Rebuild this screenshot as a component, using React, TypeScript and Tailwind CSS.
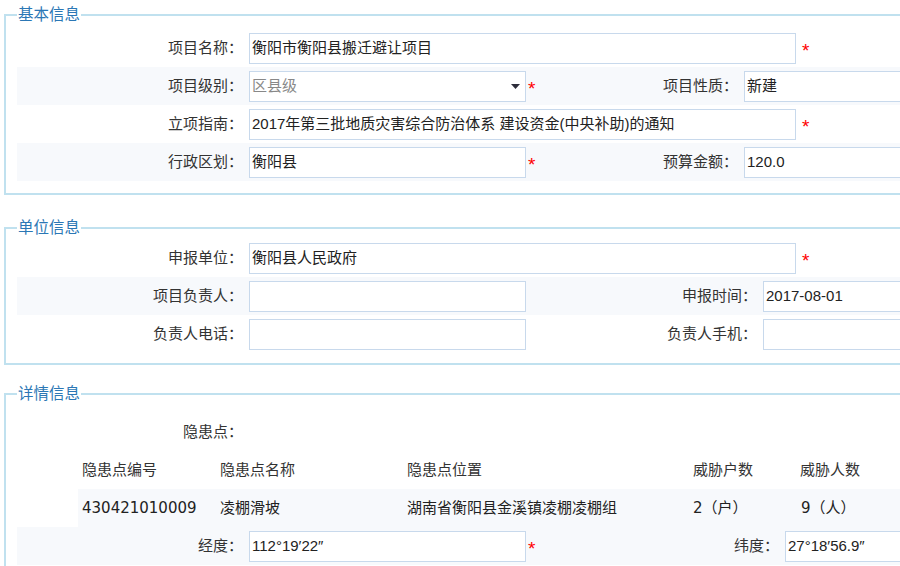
import type { ReactNode } from "react";

const font = "font-['Liberation_Sans','Noto_Sans_CJK_SC',sans-serif]";

const Star = ({ wide = false }: { wide?: boolean }) => (
  <span
    className={
      wide
        ? "ml-[6px] text-[19px] leading-none text-[#ff0000] translate-y-[2px]"
        : "ml-[2px] text-[19px] leading-none text-[#ff0000] translate-y-[2px]"
    }
  >
    *
  </span>
);

const Label = ({ children, width = "w-[232px]" }: { children: ReactNode; width?: string }) => (
  <div className={`${width} shrink-0 pr-[6px] text-right text-[15px] text-[#333]`}>{children}</div>
);

const Input = ({ value = "", wide = false }: { value?: string; wide?: boolean }) => (
  <div
    className={
      wide
        ? "flex h-[31px] w-[547px] shrink-0 items-center border border-[#c8d9ec] bg-white pl-[2px] text-[15px] text-[#222]"
        : "flex h-[31px] w-[277px] shrink-0 items-center border border-[#c8d9ec] bg-white pl-[2px] text-[15px] text-[#222]"
    }
  >
    {value}
  </div>
);

const Select = ({ value }: { value: string }) => (
  <div className="flex h-[31px] w-[277px] shrink-0 items-center justify-between border border-[#c8d9ec] bg-white pl-[2px] pr-[5px] text-[15px] text-[#888]">
    <span>{value}</span>
    <svg width="9" height="5" viewBox="0 0 9 5">
      <path d="M0 0h9L4.5 5z" fill="#2d2d3a" />
    </svg>
  </div>
);

const Row = ({ children, gray = false }: { children: ReactNode; gray?: boolean }) => (
  <div className={gray ? "flex h-[38px] items-center bg-[#f7f9fc]" : "flex h-[38px] items-center"}>
    {children}
  </div>
);

const Fieldset = ({ title, children, className }: { title: string; children: ReactNode; className: string }) => (
  <fieldset className={`ml-[4px] w-[926px] border-2 border-[#c0e1ef] pl-[11px] ${className}`}>
    <legend className="px-[1px] text-[15.5px] leading-[20px] text-[#2b77b5]">{title}</legend>
    {children}
  </fieldset>
);

export default function App() {
  return (
    <div className={`h-[566px] w-[900px] overflow-hidden bg-white ${font}`}>
      <div className="w-[940px] pt-[5px]">
        {/* 基本信息 */}
        <Fieldset title="基本信息" className="pt-[4px] pb-[12px]">
          <Row>
            <Label>项目名称：</Label>
            <Input wide value="衡阳市衡阳县搬迁避让项目" />
            <Star wide />
          </Row>
          <Row gray>
            <Label>项目级别：</Label>
            <div className="flex w-[291px] shrink-0 items-center">
              <Select value="区县级" />
              <Star />
            </div>
            <Label width="w-[204px]">项目性质：</Label>
            <Input value="新建" />
          </Row>
          <Row>
            <Label>立项指南：</Label>
            <Input wide value="2017年第三批地质灾害综合防治体系 建设资金(中央补助)的通知" />
            <Star wide />
          </Row>
          <Row gray>
            <Label>行政区划：</Label>
            <div className="flex w-[291px] shrink-0 items-center">
              <Input value="衡阳县" />
              <Star />
            </div>
            <Label width="w-[204px]">预算金额：</Label>
            <Input value="120.0" />
          </Row>
        </Fieldset>

        {/* 单位信息 */}
        <Fieldset title="单位信息" className="mt-[23px] pt-[1px] pb-[10px]">
          <Row>
            <Label>申报单位：</Label>
            <Input wide value="衡阳县人民政府" />
            <Star wide />
          </Row>
          <Row gray>
            <Label>项目负责人：</Label>
            <div className="w-[291px] shrink-0">
              <Input />
            </div>
            <Label width="w-[223px]">申报时间：</Label>
            <Input value="2017-08-01" />
          </Row>
          <Row>
            <Label>负责人电话：</Label>
            <div className="w-[291px] shrink-0">
              <Input />
            </div>
            <Label width="w-[223px]">负责人手机：</Label>
            <Input />
          </Row>
        </Fieldset>

        {/* 详情信息 */}
        <Fieldset title="详情信息" className="mt-[19px] pt-[9px] pb-[10px]">
          <Row>
            <Label>隐患点：</Label>
          </Row>
          <div className="ml-[61px] text-[15px] text-[#333]">
            <div className="flex h-[38px] items-center">
              <div className="w-[138px] pl-[4px]">隐患点编号</div>
              <div className="w-[187px] pl-[4px]">隐患点名称</div>
              <div className="w-[286px] pl-[4px]">隐患点位置</div>
              <div className="w-[107px] pl-[4px]">威胁户数</div>
              <div className="pl-[4px]">威胁人数</div>
            </div>
            <div className="flex h-[38px] items-center bg-[#f7f9fc] font-['DejaVu_Sans','Noto_Sans_CJK_SC',sans-serif] text-[#222]">
              <div className="w-[138px] pl-[4px]">430421010009</div>
              <div className="w-[187px] pl-[4px]">凌棚滑坡</div>
              <div className="w-[286px] pl-[4px]">湖南省衡阳县金溪镇凌棚凌棚组</div>
              <div className="w-[107px] pl-[4px]">2（户）</div>
              <div className="pl-[5px]">9（人）</div>
            </div>
          </div>
          <Row gray>
            <Label>经度：</Label>
            <div className="flex w-[291px] shrink-0 items-center">
              <Input value="112°19′22″" />
              <Star />
            </div>
            <Label width="w-[245px]">纬度：</Label>
            <Input value="27°18′56.9″" />
          </Row>
        </Fieldset>
      </div>
    </div>
  );
}
